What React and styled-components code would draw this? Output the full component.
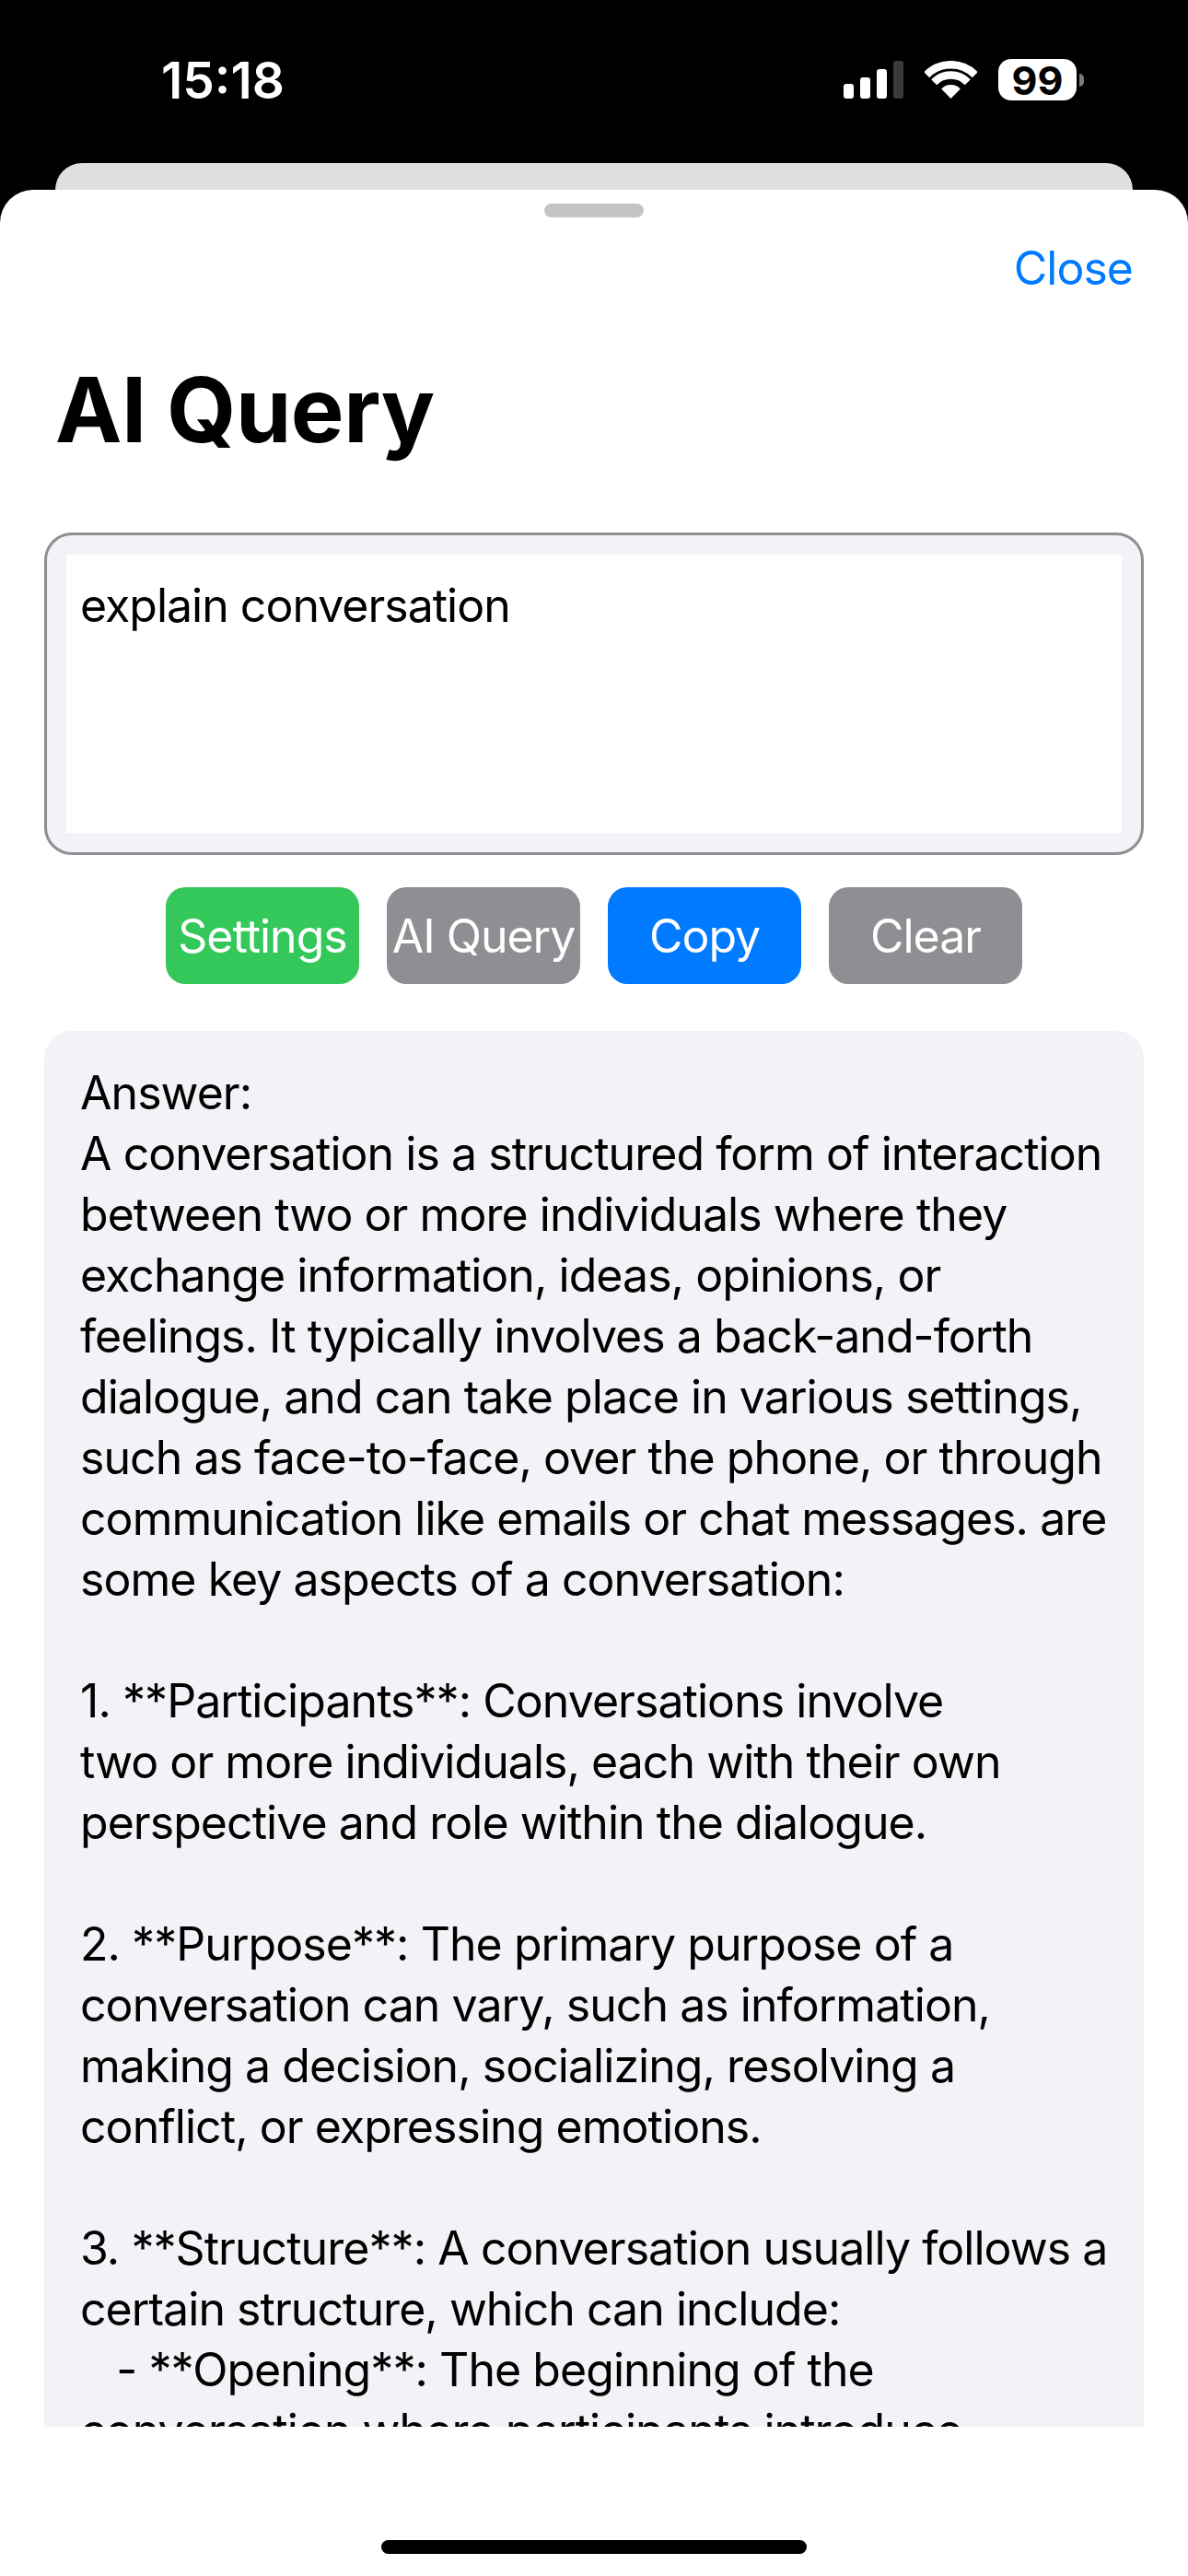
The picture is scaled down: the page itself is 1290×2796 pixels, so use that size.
import React from 'react';
import styled, { createGlobalStyle } from 'styled-components';

const answerLines = [
  'Answer:',
  'A conversation is a structured form of interaction',
  'between two or more individuals where they',
  'exchange information, ideas, opinions, or',
  'feelings. It typically involves a back-and-forth',
  'dialogue, and can take place in various settings,',
  'such as face-to-face, over the phone, or through',
  'communication like emails or chat messages. are',
  'some key aspects of a conversation:',
  '',
  '1. **Participants**: Conversations involve',
  'two or more individuals, each with their own',
  'perspective and role within the dialogue.',
  '',
  '2. **Purpose**: The primary purpose of a',
  'conversation can vary, such as information,',
  'making a decision, socializing, resolving a',
  'conflict, or expressing emotions.',
  '',
  '3. **Structure**: A conversation usually follows a',
  'certain structure, which can include:',
  '   - **Opening**: The beginning of the',
  'conversation where participants introduce',
];

const App = () => {
  return (
    <Screen>
      <GlobalStyle />
      <StatusBar>
        <Time>15:18</Time>
        <StatusIcons>
          <Signal>
            <Bar $h={16} />
            <Bar $h={23} />
            <Bar $h={32} />
            <Bar $h={41} $dim />
          </Signal>
          <svg width="57" height="41" viewBox="0 0 57 41">
            <g fill="none" stroke="#fff" strokeWidth="8.5">
              <path d="M2.2 15.2 A37 37 0 0 1 54.8 15.2" />
              <path d="M10.2 23.2 A25.5 25.5 0 0 1 46.8 23.2" />
            </g>
            <path d="M28.5 41 L18.2 30.4 A14.5 14.5 0 0 1 38.8 30.4 Z" fill="#fff" />
          </svg>
          <Battery>
            <BatteryBody>99</BatteryBody>
            <BatteryNub />
          </Battery>
        </StatusIcons>
      </StatusBar>
      <BackCard />
      <Sheet>
        <Handle />
        <CloseRow>
          <CloseLink>Close</CloseLink>
        </CloseRow>
        <Title>AI Query</Title>
        <InputFrame>
          <InputField>explain conversation</InputField>
        </InputFrame>
        <ButtonRow>
          <ActionButton $bg="#34c759">Settings</ActionButton>
          <ActionButton $bg="#8e8e93">AI Query</ActionButton>
          <ActionButton $bg="#007aff">Copy</ActionButton>
          <ActionButton $bg="#8e8e93">Clear</ActionButton>
        </ButtonRow>
        <AnswerCard>
          {answerLines.map((line, i) => (
            <AnswerLine key={i}>{line || ' '}</AnswerLine>
          ))}
        </AnswerCard>
        <HomeArea>
          <HomeIndicator />
        </HomeArea>
      </Sheet>
    </Screen>
  );
};

const GlobalStyle = createGlobalStyle`
  html, body {
    margin: 0;
    padding: 0;
    background: #000;
  }
  * {
    box-sizing: border-box;
  }
`;

const Screen = styled.div`
  width: 1290px;
  height: 2796px;
  display: flex;
  flex-direction: column;
  background: #000;
  overflow: hidden;
  font-family: Inter, "Liberation Sans", sans-serif;
`;

const StatusBar = styled.div`
  height: 177px;
  flex: none;
  display: flex;
  justify-content: space-between;
  align-items: flex-start;
  padding: 63px 113px 0 175px;
`;

const Time = styled.div`
  color: #fff;
  font-size: 55px;
  font-weight: 600;
  line-height: 48px;
`;

const StatusIcons = styled.div`
  display: flex;
  align-items: flex-start;
  gap: 23px;
  padding-top: 3px;
`;

const Signal = styled.div`
  display: flex;
  align-items: flex-end;
  gap: 7px;
  height: 41px;
`;

const Bar = styled.div`
  width: 11px;
  height: ${(p) => p.$h}px;
  border-radius: 3px;
  background: ${(p) => (p.$dim ? '#3a3a3c' : '#fff')};
`;

const Battery = styled.div`
  display: flex;
  align-items: center;
  gap: 3px;
  margin-top: -2px;
`;

const BatteryBody = styled.div`
  width: 85px;
  height: 45px;
  border-radius: 14px;
  background: #fff;
  color: #000;
  display: flex;
  align-items: center;
  justify-content: center;
  font-size: 43px;
  font-weight: 700;
`;

const BatteryNub = styled.div`
  width: 5px;
  height: 14px;
  border-radius: 0 7px 7px 0;
  background: #7c7c7c;
`;

const BackCard = styled.div`
  height: 29px;
  flex: none;
  margin: 0 60px;
  background: #e0e0e0;
  border-radius: 30px 30px 0 0;
`;

const Sheet = styled.div`
  flex: 1;
  display: flex;
  flex-direction: column;
  background: #fff;
  border-radius: 36px 36px 0 0;
  padding-top: 15px;
`;

const Handle = styled.div`
  width: 108px;
  height: 15px;
  flex: none;
  align-self: center;
  border-radius: 8px;
  background: #c4c4c6;
`;

const CloseRow = styled.div`
  display: flex;
  justify-content: flex-end;
  padding: 25px 60px 0;
`;

const CloseLink = styled.a`
  color: #007aff;
  font-size: 50px;
  line-height: 60px;
  letter-spacing: -1px;
`;

const Title = styled.h1`
  margin: 65px 0 0;
  padding-left: 60px;
  color: #000;
  font-size: 97px;
  font-weight: 700;
  line-height: 118px;
  letter-spacing: -0.5px;
`;

const InputFrame = styled.div`
  margin: 74px 48px 0;
  height: 350px;
  flex: none;
  padding: 21px 21px;
  background: #f2f2f7;
  border: 3px solid #8e8e93;
  border-radius: 30px;
  display: flex;
`;

const InputField = styled.div`
  flex: 1;
  background: #fff;
  padding: 25px 15px;
  color: #000;
  font-size: 50px;
  line-height: 60px;
  letter-spacing: -1px;
`;

const ButtonRow = styled.div`
  display: flex;
  justify-content: center;
  gap: 30px;
  margin-top: 35px;
`;

const ActionButton = styled.div`
  width: 210px;
  height: 105px;
  display: flex;
  align-items: center;
  justify-content: center;
  border-radius: 21px;
  background: ${(p) => p.$bg};
  color: #fff;
  font-size: 50px;
  letter-spacing: -1px;
  white-space: nowrap;
`;

const AnswerCard = styled.div`
  margin: 51px 48px 0;
  height: 1515px;
  flex: none;
  padding: 34px 39px 0;
  border-radius: 30px 30px 0 0;
  background: #f2f2f7;
  overflow: hidden;
`;

const AnswerLine = styled.div`
  height: 66px;
  color: #000;
  font-size: 50px;
  line-height: 66px;
  letter-spacing: -0.95px;
  white-space: pre;
`;

const HomeArea = styled.div`
  flex: 1;
  display: flex;
  justify-content: center;
  padding-top: 123px;
`;

const HomeIndicator = styled.div`
  width: 462px;
  height: 15px;
  border-radius: 8px;
  background: #000;
`;

export default App;
